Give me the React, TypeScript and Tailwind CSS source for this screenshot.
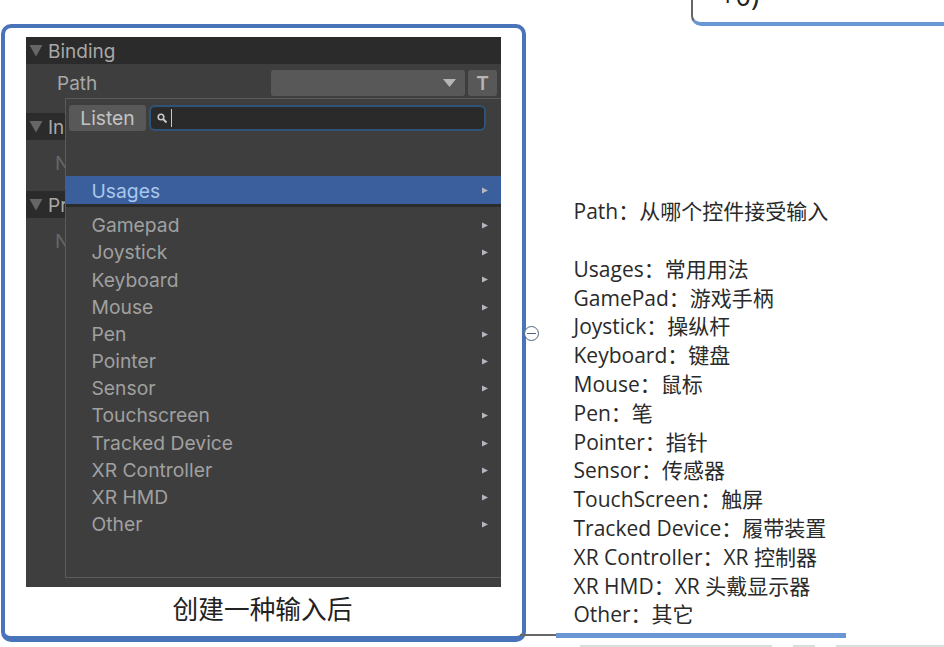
const items = ["Gamepad","Joystick","Keyboard","Mouse","Pen","Pointer","Sensor","Touchscreen","Tracked Device","XR Controller","XR HMD","Other"];
const notes = ["Usages：常用用法","GamePad：游戏手柄","Joystick：操纵杆","Keyboard：键盘","Mouse：鼠标","Pen：笔","Pointer：指针","Sensor：传感器","TouchScreen：触屏","Tracked Device：履带装置","XR Controller：XR 控制器","XR HMD：XR 头戴显示器","Other：其它"];

function Tri() {
  return <svg width="14" height="13" viewBox="0 0 14 13" className="shrink-0"><path d="M0.5 1h13L7 12.5z" fill="#666666" /></svg>;
}
function Arrow() {
  return <svg width="6" height="7" viewBox="0 0 6 7" className="shrink-0"><path d="M0 0.5l6 3-6 3z" fill="#b4b8be" /></svg>;
}
function Header({ label }: { label: string }) {
  return (
    <div className="h-[27px] bg-[#2b2b2b] flex items-center pl-[3px] gap-[5px] text-[19px] text-[#a8a8a8]">
      <Tri />
      <span className="pt-[3px]">{label}</span>
    </div>
  );
}

export default function App() {
  return (
    <div className="relative w-[944px] h-[647px] overflow-hidden bg-white font-['Inter','Noto_Sans_CJK_SC',sans-serif]">
      <div className="absolute left-[691px] top-[-20px] w-[300px] h-[46px] rounded-bl-[10px] border-l-2 border-l-[#666] border-b-[4px] border-b-[#6a96d4]">
        <span className="absolute left-[27px] top-[1px] text-[27px] leading-[30px] text-[#222] font-['Noto_Sans',sans-serif]">+0)</span>
      </div>

      <div className="absolute left-[520px] top-[634px] w-[40px] h-[2px] bg-[#666]" />
      <div className="absolute left-[556px] top-[633px] w-[290px] h-[5px] bg-[#6a96d4]" />
      <div className="absolute left-[580px] top-[645px] w-[192px] h-[2px] bg-[#ddd]" />
      <div className="absolute left-[793px] top-[645px] w-[22px] h-[2px] bg-[#ddd]" />
      <div className="absolute left-[836px] top-[645px] w-[108px] h-[2px] bg-[#ddd]" />
      <div className="absolute left-[524px] top-[326px] w-[15px] h-[15px] rounded-full border border-[#4f6478] bg-white flex items-center justify-center">
        <div className="w-[9px] h-px bg-[#4f6478]" />
      </div>

      <div className="flex items-start pt-[24px] pl-px">
        <div className="w-[525px] h-[618px] shrink-0 rounded-[10px] border-[4px] border-b-[6px] border-[#4a74ba] bg-white pl-[21px] pt-[9px] flex flex-col items-start">
          <div className="relative w-[475px] h-[550px] bg-[#3e3e3e] text-[19.3px] text-[#a0a0a0] overflow-hidden">
            <Header label="Binding" />
            <div className="h-[34px] flex items-start pt-[6px] pl-[31px] pr-[4px]">
              <span className="text-[#a8a8a8] leading-[28px] text-[19px]">Path</span>
              <div className="ml-auto w-[194px] h-[26px] rounded-[3px] bg-[#585858] flex items-center justify-end pr-[9px]">
                <svg width="13" height="8" viewBox="0 0 13 8"><path d="M0 0h13L6.5 8z" fill="#b5b5b5" /></svg>
              </div>
              <div className="ml-[3px] w-[29px] h-[26px] rounded-[3px] bg-[#585858] flex items-center justify-center text-[#b5b5b5] font-semibold">T</div>
            </div>
            <div className="h-[15px]" />
            <Header label="In" />
            <div className="h-[51px] pl-[29px] pt-[9px] text-[#666]">N</div>
            <Header label="Pr" />
            <div className="pl-[29px] pt-[9px] text-[#666]">N</div>

            <div className="absolute left-[39px] top-[61px] w-[436px] h-[480px] bg-[#3e3e3e] border-l border-t border-b border-[#5a5a5a] pt-[6px]">
              <div className="flex items-center pl-[3px] gap-[3px]">
                <div className="w-[77px] h-[26px] pt-px rounded-[3px] bg-[#585858] flex items-center justify-center text-[#c4c4c4]">Listen</div>
                <div className="w-[337px] h-[26px] rounded-[6px] bg-[#2a2a2a] border-2 border-[#2f5278] flex items-center pl-[5px] gap-[3px]">
                  <svg width="12" height="12" viewBox="0 0 12 12" fill="none" stroke="#c8c8c8"><circle cx="5" cy="5" r="2.8" strokeWidth="1.6" /><path d="M7 7l3.5 3.5" strokeWidth="2" /></svg>
                  <div className="w-px h-[18px] bg-[#c8c8c8]" />
                </div>
              </div>
              <div className="mt-[45px] h-[28px] bg-[#3a5f9c] border-b-[3px] border-[#2b2b2b] box-content flex items-center pl-[25.5px] pr-[13px] text-[#a9c8ee]">
                <span className="pt-[2px]">Usages</span>
                <span className="ml-auto"><Arrow /></span>
              </div>
              <div className="pt-[5px]">
                {items.map((t) => (
                  <div key={t} className="h-[27.2px] flex items-center pl-[25.5px] pr-[13px]">
                    <span>{t}</span>
                    <span className="ml-auto"><Arrow /></span>
                  </div>
                ))}
              </div>
            </div>
          </div>
          <div className="w-[473px] pt-[6px] text-center text-[25.7px] leading-[34px] text-[#222]">创建一种输入后</div>
        </div>

        <div className="ml-[47.5px] pt-[173px] text-[21px] leading-[28.8px] text-[#2a2a2a] whitespace-nowrap font-['Open_Sans','Noto_Sans_CJK_SC',sans-serif]">
          <div>Path：从哪个控件接受输入</div>
          <div className="h-[29px]" />
          {notes.map((n) => <div key={n}>{n}</div>)}
        </div>
      </div>
    </div>
  );
}
